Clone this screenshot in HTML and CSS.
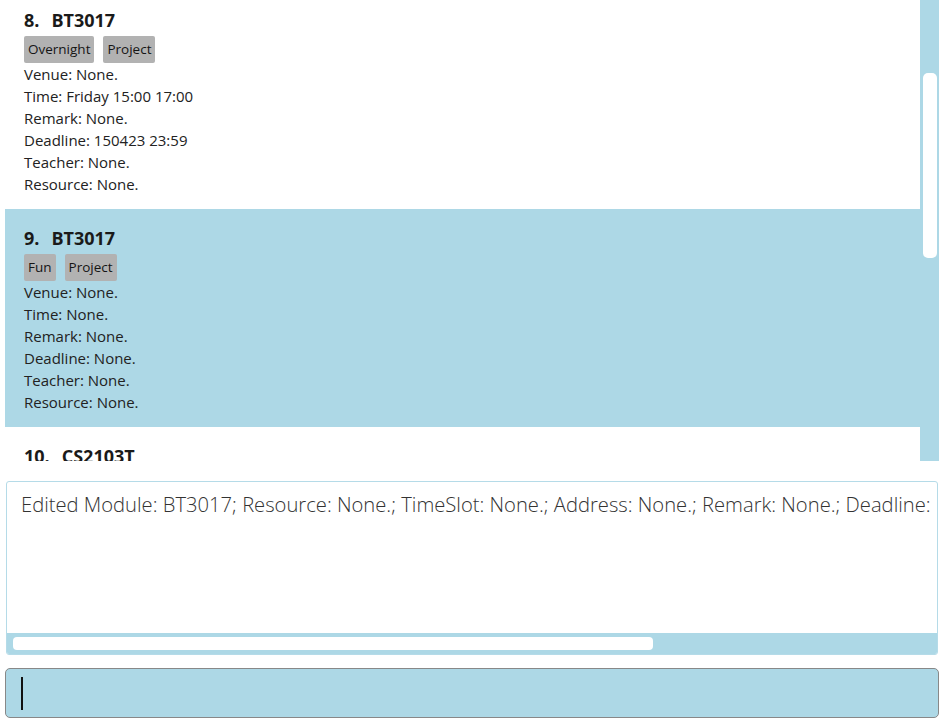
FILE: index.html
```html
<!DOCTYPE html>
<html>
<head>
<meta charset="utf-8">
<link rel="stylesheet" href="styles.css">
</head>
<body>
<div class="app">
  <div class="list">
    <div class="cells">
      <div class="cell first">
        <div class="title"><span class="idx">8.</span>BT3017</div>
        <div class="tags"><span class="tag">Overnight</span><span class="tag">Project</span></div>
        <div class="line">Venue: None.</div>
        <div class="line">Time: Friday 15:00 17:00</div>
        <div class="line">Remark: None.</div>
        <div class="line">Deadline: 150423 23:59</div>
        <div class="line">Teacher: None.</div>
        <div class="line">Resource: None.</div>
      </div>
      <div class="cell selected">
        <div class="title"><span class="idx">9.</span>BT3017</div>
        <div class="tags"><span class="tag">Fun</span><span class="tag">Project</span></div>
        <div class="line">Venue: None.</div>
        <div class="line">Time: None.</div>
        <div class="line">Remark: None.</div>
        <div class="line">Deadline: None.</div>
        <div class="line">Teacher: None.</div>
        <div class="line">Resource: None.</div>
      </div>
      <div class="cell">
        <div class="title"><span class="idx">10.</span>CS2103T</div>
      </div>
    </div>
    <div class="vscroll"><div class="vthumb"></div></div>
  </div>
  <div class="result">
    <div class="result-text">Edited Module: BT3017; Resource: None.; TimeSlot: None.; Address: None.; Remark: None.; Deadline:</div>
    <div class="hscroll"><div class="hthumb"></div></div>
  </div>
  <div class="command"><span class="caret"></span></div>
</div>
</body>
</html>
```
FILE: styles.css
```css
html, body {
  margin: 0;
  padding: 0;
  background: #ffffff;
}
body {
  font-family: "Open Sans", "Noto Sans", sans-serif;
  color: #222222;
  width: 945px;
  height: 723px;
  overflow: hidden;
}
.app {
  display: flex;
  flex-direction: column;
  padding: 0 6px 5px 5px;
}
.list {
  display: flex;
  height: 461px;
  overflow: hidden;
}
.cells {
  flex: 1;
  display: flex;
  flex-direction: column;
  overflow: hidden;
}
.cell {
  padding: 17px 0 14px 19px;
  flex-shrink: 0;
}
.cell.first {
  margin-top: -9px;
}
.cell.selected {
  background: #add8e6;
}
.title {
  font-size: 18px;
  font-weight: 700;
  line-height: 24px;
  color: #1a1a1a;
}
.idx {
  margin-right: 12px;
}
.tags {
  display: flex;
  gap: 9px;
  margin-top: 4px;
}
.tag {
  background: #b2b2b2;
  border-radius: 2px;
  font-size: 13.5px;
  line-height: 27px;
  height: 27px;
  padding: 0 4px;
  color: #151515;
}
.line {
  font-size: 15px;
  line-height: 22px;
}
.vscroll {
  width: 19px;
  background: #add8e6;
  display: flex;
  justify-content: center;
  padding-top: 73px;
  box-sizing: border-box;
}
.vthumb {
  width: 14px;
  height: 185px;
  background: #ffffff;
  border-radius: 5px;
}
.result {
  margin-top: 20px;
  margin-left: 1px;
  margin-right: 1px;
  height: 172px;
  border: 1px solid #b5dbe8;
  border-radius: 3px;
  display: flex;
  flex-direction: column;
  overflow: hidden;
}
.result-text {
  flex: 1;
  padding: 8px 0 0 14px;
  font-size: 20.2px;
  font-weight: 300;
  line-height: 28px;
  white-space: nowrap;
  overflow: hidden;
  color: #333333;
}
.hscroll {
  height: 21px;
  background: #add8e6;
  display: flex;
  align-items: center;
  padding-left: 6px;
}
.hthumb {
  width: 640px;
  height: 13px;
  background: #ffffff;
  border-radius: 4px;
}
.command {
  margin-top: 13px;
  height: 48px;
  background: #add8e6;
  border: 1px solid #888888;
  border-radius: 5px;
  display: flex;
  align-items: center;
  padding-left: 15px;
}
.caret {
  width: 1.5px;
  height: 33px;
  background: #111111;
}
```
